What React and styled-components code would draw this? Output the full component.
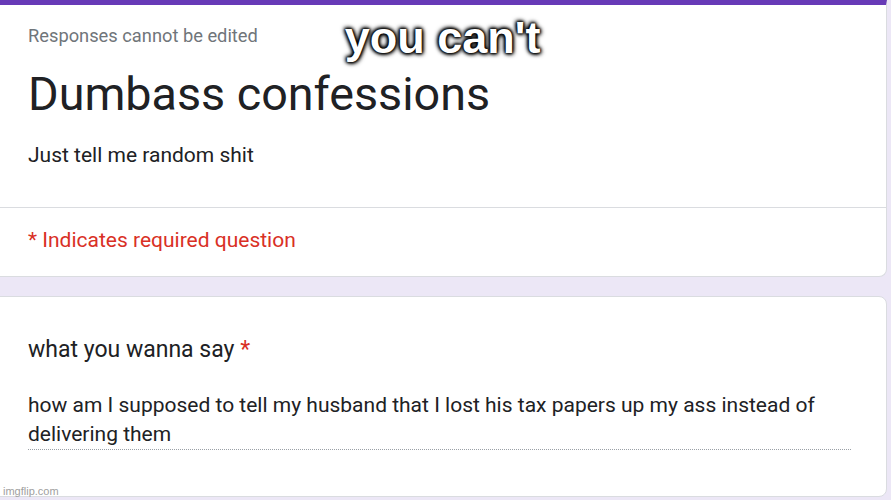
import React from 'react';
import styled, { createGlobalStyle } from 'styled-components';

const GlobalStyle = createGlobalStyle`
    html, body {
        margin: 0;
        padding: 0;
        background: #ece7f6;
        overflow: hidden;
    }
    body {
        width: 891px;
        height: 500px;
        font-family: Roboto, "Noto Sans", Arial, sans-serif;
    }
`;

const Page = styled.div`
    position: relative;
    width: 891px;
    height: 500px;
    overflow: hidden;
    display: flex;
    flex-direction: column;
    gap: 19px;
`;

const Card = styled.div`
    margin-left: -12px;
    width: 899px;
    box-sizing: border-box;
    background: #fff;
    border: 1px solid #dadce0;
    border-top: ${props => (props.accent ? '5px solid #673ab7' : '1px solid #dadce0')};
    border-radius: ${props => (props.accent ? '0 0 8px 8px' : '8px')};
    flex-shrink: 0;
`;

const Section = styled.div`
    padding: ${props => props.pad};
    padding-left: 39px;
    padding-right: 35px;
    border-bottom: ${props => (props.divider ? '1px solid #dadce0' : 'none')};
`;

const Note = styled.div`
    font-size: 18.3px;
    line-height: 20px;
    color: #70757a;
`;

const Title = styled.h1`
    margin: 20px 0 0;
    font-size: 46.7px;
    line-height: 56px;
    font-weight: 400;
    color: #202124;
`;

const Description = styled.div`
    margin-top: 19px;
    font-size: 21px;
    line-height: 28px;
    color: #202124;
`;

const Required = styled.div`
    font-size: 21px;
    line-height: 28px;
    color: #d93025;
`;

const Question = styled.div`
    font-size: 23px;
    line-height: 28px;
    color: #202124;
`;

const Star = styled.span`
    color: #d93025;
`;

const Answer = styled.div`
    margin-top: 27px;
    font-size: 21px;
    line-height: 29px;
    color: #202124;
    border-bottom: 1px dotted #9aa0a6;
`;

const Caption = styled.div`
    position: absolute;
    top: 15px;
    left: 50%;
    transform: translateX(-50%);
    margin-left: -3px;
    font-family: "Liberation Sans", Arial, sans-serif;
    font-weight: 700;
    font-size: 45px;
    line-height: 45px;
    color: #fff;
    white-space: nowrap;
    text-shadow: 0 0 2px #000, 0 0 3px #000, 0 0 4px #000, 1px 1px 5px #000, -1px -1px 5px #000;
`;

const Watermark = styled.div`
    position: absolute;
    left: 3px;
    bottom: 3px;
    font-family: "Liberation Sans", Arial, sans-serif;
    font-size: 11px;
    color: #a0a0a0;
`;

export default function App() {
    return (
        <Page>
            <GlobalStyle />
            <Card accent>
                <Section pad="21px 0 38px" divider>
                    <Note>Responses cannot be edited</Note>
                    <Title>Dumbass confessions</Title>
                    <Description>Just tell me random shit</Description>
                </Section>
                <Section pad="18px 0 22px">
                    <Required>* Indicates required question</Required>
                </Section>
            </Card>
            <Card>
                <Section pad="39px 0 46px">
                    <Question>
                        what you wanna say <Star>*</Star>
                    </Question>
                    <Answer>
                        how am I supposed to tell my husband that I lost his tax papers up my ass instead of delivering them
                    </Answer>
                </Section>
            </Card>
            <Caption>you can't</Caption>
            <Watermark>imgflip.com</Watermark>
        </Page>
    );
}
